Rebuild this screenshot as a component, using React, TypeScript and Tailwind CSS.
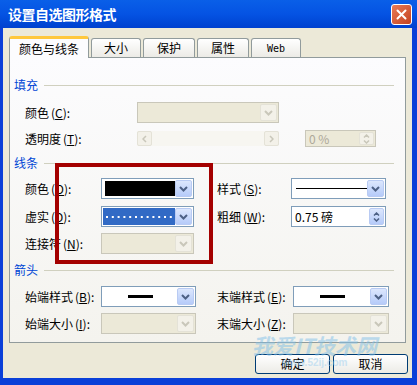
import React from 'react';

const cjk = { fontFamily: '"Noto Sans CJK SC", "Noto Sans", sans-serif' };

function Chevron({ disabled }: { disabled?: boolean }) {
  return (
    <svg width="9" height="6" viewBox="0 0 9 6">
      <path d="M1 1 L4.5 4.5 L8 1" fill="none" stroke={disabled ? '#C9C7BA' : '#4D6185'} strokeWidth="2" />
    </svg>
  );
}

function ArrowBtn({ disabled }: { disabled?: boolean }) {
  return (
    <div
      className={`w-[17px] h-full flex items-center justify-center rounded-[2px] border ${
        disabled ? 'border-[#E4E2D7] bg-[#F3F1E9]' : 'border-[#B9CBF3] bg-gradient-to-b from-[#DCE7FD] to-[#B6CBF9]'
      }`}
    >
      <Chevron disabled={disabled} />
    </div>
  );
}

function Dropdown({
  width,
  disabled,
  children,
  selected,
}: {
  width: string;
  disabled?: boolean;
  children?: React.ReactNode;
  selected?: boolean;
}) {
  return (
    <div
      className={`${width} h-[21px] flex items-stretch border p-[1px] ${
        disabled ? 'border-[#C9C7BA] bg-[#ECE9D8]' : 'border-[#7F9DB9] bg-white'
      }`}
    >
      <div className={`flex-1 flex items-center overflow-hidden ${selected ? 'bg-[#316AC5]' : ''}`}>{children}</div>
      <ArrowBtn disabled={disabled} />
    </div>
  );
}

function Label({ width, text, k }: { width: string; text: string; k: string }) {
  return (
    <div className={`${width} text-[12px] leading-[14px] text-black whitespace-nowrap`} style={cjk}>
      {text}
      <span className="ml-[2px]">
        (<u>{k}</u>):
      </span>
    </div>
  );
}

function Header({ text }: { text: string }) {
  return (
    <div className="h-[14px] flex items-center pl-[4px] pr-[11px]">
      <span className="text-[12px] leading-[14px] text-[#0046D5]" style={cjk}>
        {text}
      </span>
      <div className="flex-1 ml-[6px] mt-[1px] h-px bg-[#D0D0BF]" />
    </div>
  );
}

function Spin({ width, disabled, text }: { width: string; disabled?: boolean; text: string }) {
  return (
    <div
      className={`${width} h-full flex items-stretch border p-[1px] ${
        disabled ? 'border-[#C9C7BA] bg-[#ECE9D8]' : 'border-[#7F9DB9] bg-white'
      }`}
    >
      <div
        className={`flex-1 flex items-center pl-[2px] text-[12px] ${disabled ? 'text-[#ACA899]' : 'text-black'}`}
        style={cjk}
      >
        {text}
      </div>
      <div
        className={`w-[15px] flex flex-col items-center justify-center gap-[2px] rounded-[2px] border ${
          disabled ? 'border-[#E4E2D7] bg-[#F3F1E9]' : 'border-[#B9CBF3] bg-gradient-to-b from-[#DCE7FD] to-[#B6CBF9]'
        }`}
      >
        <svg width="7" height="4" viewBox="0 0 7 4">
          <path d="M1 3.5 L3.5 1 L6 3.5" fill="none" stroke={disabled ? '#C9C7BA' : '#4D6185'} strokeWidth="1.5" />
        </svg>
        <svg width="7" height="4" viewBox="0 0 7 4">
          <path d="M1 0.5 L3.5 3 L6 0.5" fill="none" stroke={disabled ? '#C9C7BA' : '#4D6185'} strokeWidth="1.5" />
        </svg>
      </div>
    </div>
  );
}

function Tab({ text, active, width, mono }: { text: string; active?: boolean; width: string; mono?: boolean }) {
  return (
    <div
      className={`${width} flex items-center justify-center rounded-t-[3px] border border-b-0 ${
        active
          ? 'h-[22px] border-[#919B9C] border-t-[3px] border-t-[#FFC83C] bg-[#FCFCFE] -mb-px relative z-10'
          : 'h-[19px] border-[#919B9C] bg-gradient-to-b from-white to-[#ECEBE6]'
      }`}
    >
      <span
        className={mono ? 'text-[10px] text-black' : 'text-[12px] text-black'}
        style={mono ? { fontFamily: '"DejaVu Sans Mono", monospace' } : cjk}
      >
        {text}
      </span>
    </div>
  );
}

function Button({ text }: { text: string }) {
  return (
    <div className="w-[75px] h-[20px] flex items-center justify-center rounded-[3px] border border-[#003C74] bg-gradient-to-b from-white to-[#ECEBE6]">
      <span className="text-[12px] text-black" style={cjk}>
        {text}
      </span>
    </div>
  );
}

export default function App() {
  return (
    <div className="w-[417px] h-[385px] bg-[#0A3FD8] flex flex-col overflow-hidden relative select-none">
      {/* title bar */}
      <div className="h-[28px] flex items-center justify-between pl-[8px] pr-[5px] bg-gradient-to-b from-[#0A5FE8] via-[#0553E3] to-[#0041CF]">
        <span className="text-white text-[14px] font-bold tracking-[-0.5px]" style={cjk}>
          设置自选图形格式
        </span>
        <div className="w-[21px] h-[21px] rounded-[3px] border border-white bg-gradient-to-br from-[#E97A55] to-[#C4411F] flex items-center justify-center">
          <svg width="11" height="11" viewBox="0 0 11 11">
            <path d="M1.5 1.5 L9.5 9.5 M9.5 1.5 L1.5 9.5" stroke="white" strokeWidth="2" strokeLinecap="round" />
          </svg>
        </div>
      </div>

      {/* body */}
      <div className="flex-1 ml-[3px] mr-[5px] mb-[7px] bg-[#ECE9D8] flex flex-col pl-[6px] pt-[7px]">
        <div className="flex items-end gap-[2px] h-[22px]">
          <Tab text="颜色与线条" active width="w-[80px]" />
          <Tab text="大小" width="w-[50px]" />
          <Tab text="保护" width="w-[52px]" />
          <Tab text="属性" width="w-[52px]" />
          <Tab text="Web" width="w-[50px]" mono />
        </div>

        {/* panel */}
        <div className="w-[397px] h-[286px] border border-[#919B9C] bg-gradient-to-b from-[#FCFCFE] to-[#F4F3EE] flex flex-col pt-[20px]">
          <Header text="填充" />
          <div className="mt-[10px] h-[21px] flex items-center pl-[15px]">
            <Label width="w-[112px]" text="颜色" k="C" />
            <Dropdown width="w-[142px]" disabled />
          </div>
          <div className="mt-[7px] h-[17px] flex items-center pl-[15px]">
            <Label width="w-[112px]" text="透明度" k="T" />
            <div className="w-[142px] h-[15px] flex items-stretch bg-[#F7F6F1]">
              <div className="w-[15px] flex items-center justify-center rounded-[2px] border border-[#E4E2D7] bg-[#F3F1E9]">
                <svg width="5" height="8" viewBox="0 0 5 8">
                  <path d="M4 1 L1 4 L4 7" fill="none" stroke="#C9C7BA" strokeWidth="1.5" />
                </svg>
              </div>
              <div className="flex-1" />
              <div className="w-[15px] flex items-center justify-center rounded-[2px] border border-[#E4E2D7] bg-[#F3F1E9]">
                <svg width="5" height="8" viewBox="0 0 5 8">
                  <path d="M1 1 L4 4 L1 7" fill="none" stroke="#C9C7BA" strokeWidth="1.5" />
                </svg>
              </div>
            </div>
            <div className="ml-[26px] h-full">
              <Spin width="w-[71px]" disabled text="0 %" />
            </div>
          </div>

          <div className="mt-[9px]">
            <Header text="线条" />
          </div>
          <div className="mt-[8px] h-[21px] flex items-center pl-[15px]">
            <Label width="w-[76px]" text="颜色" k="O" />
            <Dropdown width="w-[93px]">
              <div className="ml-[2px] w-[74px] h-[15px] bg-black" />
            </Dropdown>
            <div className="w-[23px]" />
            <Label width="w-[74px]" text="样式" k="S" />
            <Dropdown width="w-[95px]">
              <div className="ml-[3px] w-[72px] h-px bg-black" />
            </Dropdown>
          </div>
          <div className="mt-[7px] h-[21px] flex items-center pl-[15px]">
            <Label width="w-[76px]" text="虚实" k="D" />
            <Dropdown width="w-[93px]" selected>
              <svg width="74" height="4" className="ml-[2px]">
                {Array.from({ length: 13 }).map((_, i) => (
                  <rect key={i} x={1 + i * 5.8} y={1} width={2} height={2} fill="white" />
                ))}
              </svg>
            </Dropdown>
            <div className="w-[23px]" />
            <Label width="w-[74px]" text="粗细" k="W" />
            <div className="h-[21px]">
              <Spin width="w-[95px]" text="0.75 磅" />
            </div>
          </div>
          <div className="mt-[6px] h-[21px] flex items-center pl-[15px]">
            <Label width="w-[76px]" text="连接符" k="N" />
            <Dropdown width="w-[93px]" disabled />
          </div>

          <div className="mt-[9px]">
            <Header text="箭头" />
          </div>
          <div className="mt-[9px] h-[21px] flex items-center pl-[15px]">
            <Label width="w-[76px]" text="始端样式" k="B" />
            <Dropdown width="w-[95px]">
              <div className="w-full flex justify-center">
                <div className="w-[25px] h-[3px] bg-black" />
              </div>
            </Dropdown>
            <div className="w-[21px]" />
            <Label width="w-[76px]" text="末端样式" k="E" />
            <Dropdown width="w-[96px]">
              <div className="w-full flex justify-center">
                <div className="w-[25px] h-[3px] bg-black" />
              </div>
            </Dropdown>
          </div>
          <div className="mt-[6px] h-[21px] flex items-center pl-[15px]">
            <Label width="w-[76px]" text="始端大小" k="I" />
            <Dropdown width="w-[95px]" disabled />
            <div className="w-[21px]" />
            <Label width="w-[76px]" text="末端大小" k="Z" />
            <Dropdown width="w-[96px]" disabled />
          </div>
        </div>

        <div className="flex justify-end gap-[3px] mt-[11px] pr-[4px]">
          <Button text="确定" />
          <Button text="取消" />
        </div>
      </div>

      {/* red highlight box */}
      <div className="absolute left-[55px] top-[163px] w-[158px] h-[101px] border-[4px] border-[#A40000] pointer-events-none" />

      {/* watermark */}
      <div className="absolute left-[252px] top-[334px] pointer-events-none opacity-50 flex flex-col items-center">
        <span className="text-[21px] leading-[23px] font-bold italic text-[#7FC0EA]" style={cjk}>
          我爱IT技术网
        </span>
        <span className="text-[10px] leading-[11px] font-bold text-[#9FD0F0]" style={{ fontFamily: '"Liberation Sans", sans-serif' }}>
          www.52ij.com
        </span>
      </div>
    </div>
  );
}
